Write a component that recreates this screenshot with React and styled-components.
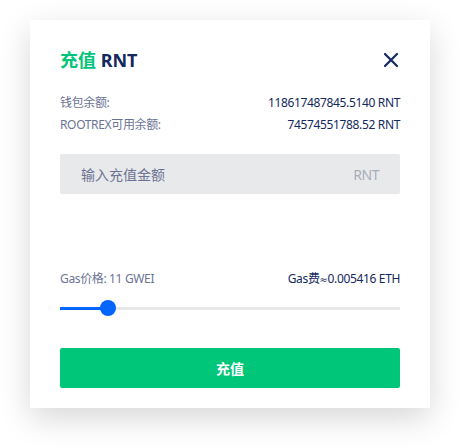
import React from "react";
import styled, { createGlobalStyle } from "styled-components";

const GlobalStyle = createGlobalStyle`
  html, body {
    margin: 0;
    padding: 0;
    background: #ffffff;
  }
  body {
    font-family: "Noto Sans", "Noto Sans CJK SC", sans-serif;
  }
`;

const Page = styled.div`
  width: 460px;
  height: 448px;
  padding: 20px 30px 0;
  box-sizing: border-box;
`;

const Modal = styled.div`
  width: 400px;
  background: #fff;
  box-shadow: 0 10px 30px rgba(0, 0, 0, 0.16);
  padding: 30px 30px 20px;
  box-sizing: border-box;
`;

const Header = styled.div`
  display: flex;
  align-items: center;
  justify-content: space-between;
  height: 20px;
`;

const Title = styled.h2`
  margin: 0;
  font-size: 18px;
  font-weight: 700;
  line-height: 20px;
  color: #13285c;
  span {
    color: #00c479;
  }
`;

const Close = styled.button`
  border: 0;
  background: none;
  padding: 0;
  width: 18px;
  height: 18px;
  display: flex;
  align-items: center;
  justify-content: center;
  cursor: pointer;
`;

const Balances = styled.div`
  margin-top: 22px;
`;

const Row = styled.div`
  display: flex;
  justify-content: space-between;
  font-size: 12px;
  line-height: 22px;
  letter-spacing: -0.35px;
  color: #6b7394;
`;

const Value = styled.span`
  color: #13285c;
`;

const Approx = styled.span`
  font-family: "DejaVu Sans", sans-serif;
  font-size: 10px;
  line-height: 0;
`;

const InputBox = styled.label`
  margin-top: 18px;
  height: 40px;
  background: #e8e9eb;
  border-radius: 2px;
  display: flex;
  align-items: center;
  padding: 0 21px 0 21px;
`;

const Input = styled.input`
  flex: 1;
  border: 0;
  background: transparent;
  outline: none;
  font-family: inherit;
  font-size: 14px;
  color: #13285c;
  padding: 0;
  &::placeholder {
    color: #6d7393;
  }
`;

const Unit = styled.span`
  font-size: 14px;
  letter-spacing: -0.5px;
  color: #a9adbb;
`;

const GasRow = styled(Row)`
  margin-top: 75px;
  height: 20px;
  line-height: 20px;
`;

const Slider = styled.div`
  position: relative;
  margin-top: 10px;
  height: 18px;
  display: flex;
  align-items: center;
`;

const Track = styled.div`
  width: 100%;
  height: 3px;
  background: #e8e8e8;
  position: relative;
`;

const Fill = styled.div`
  height: 100%;
  background: #0066ff;
`;

const Thumb = styled.div`
  position: absolute;
  top: 50%;
  width: 16px;
  height: 16px;
  border-radius: 50%;
  background: #0066ff;
  transform: translate(-50%, -50%);
`;

const Submit = styled.button`
  margin-top: 31px;
  width: 100%;
  height: 40px;
  border: 0;
  border-radius: 2px;
  background: #00c67a;
  color: #fff;
  font-family: inherit;
  font-size: 14px;
  font-weight: 700;
  cursor: pointer;
`;

export default function App() {
  const pct = 14;
  return (
    <>
      <GlobalStyle />
      <Page>
        <Modal>
          <Header>
            <Title>
              <span>充值</span> RNT
            </Title>
            <Close aria-label="close">
              <svg width="16" height="16" viewBox="0 0 16 16">
                <path
                  d="M2 2L14 14M14 2L2 14"
                  stroke="#13285c"
                  strokeWidth="2.2"
                  strokeLinecap="round"
                />
              </svg>
            </Close>
          </Header>
          <Balances>
            <Row>
              <span>钱包余额:</span>
              <Value>118617487845.5140 RNT</Value>
            </Row>
            <Row>
              <span>ROOTREX可用余额:</span>
              <Value>74574551788.52 RNT</Value>
            </Row>
          </Balances>
          <InputBox>
            <Input placeholder="输入充值金额" />
            <Unit>RNT</Unit>
          </InputBox>
          <GasRow>
            <span>Gas价格: 11 GWEI</span>
            <Value>
              Gas费<Approx>≈</Approx>0.005416 ETH
            </Value>
          </GasRow>
          <Slider>
            <Track>
              <Fill style={{ width: `${pct}%` }} />
            </Track>
            <Thumb style={{ left: `${pct}%` }} />
          </Slider>
          <Submit>充值</Submit>
        </Modal>
      </Page>
    </>
  );
}
